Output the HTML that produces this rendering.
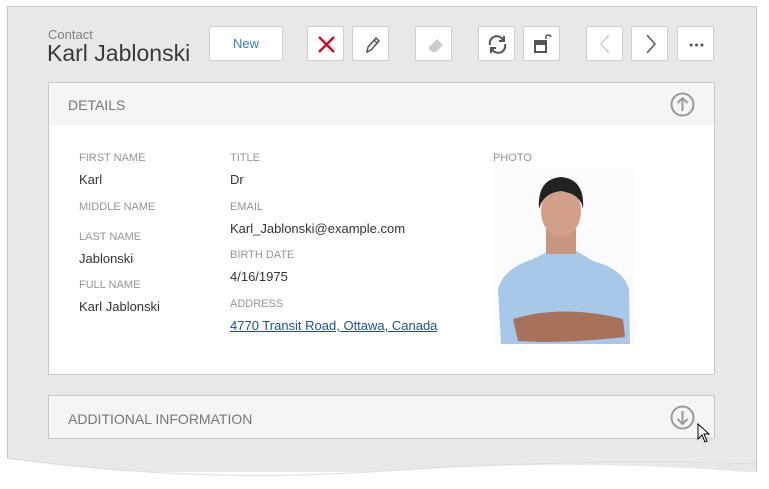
<html><head><style>
body{margin:0;width:769px;height:489px;background:#fff;position:relative;overflow:hidden;font-family:"Liberation Sans",sans-serif}
.win{position:absolute;left:7px;top:6px;width:748px;height:465px;background:#e8e8e7;border:1px solid #c8c8c8;border-bottom:none}
.a{position:absolute}
.btn{position:absolute;top:26px;height:35px;width:37px;background:#fff;border:1px solid #cfcfcf;border-radius:2px;box-sizing:border-box}
.btn svg{position:absolute;left:0;top:0}
.lbl{position:absolute;font-size:11px;color:#959595}
.val{position:absolute;font-size:13px;color:#333}
</style></head><body>
<div class="win"></div>
<svg class="a" style="left:0;top:440px" width="769" height="49"><path d="M0 18 Q200 45 400 30 Q600 18 769 34 L769 49 L0 49Z" fill="#fff"/><path d="M7 18 Q200 45 400 30 Q600 18 756 24" stroke="#ddd" fill="none"/></svg>
<div class="a" style="left:48px;top:27px;font-size:13px;color:#808080">Contact</div>
<div class="a" style="left:47px;top:40px;font-size:23px;color:#3a3a3a">Karl Jablonski</div>
<div class="btn" style="left:209px;width:74px;color:#2f7fd6;font-size:13px;text-align:center;line-height:33px">New</div>
<div class="btn" style="left:307px"><svg width="37" height="35"><path d="M11 10L26 25M26 10L11 25" stroke="#c8102e" stroke-width="2.5"/></svg></div>
<div class="btn" style="left:352px"><svg width="37" height="35"><path d="M14 25L15 20L23 11L26 14L18 23Z M21 13L24 16" stroke="#555" stroke-width="1.5" fill="none"/></svg></div>
<div class="btn" style="left:415px"><svg width="37" height="35"><path d="M12 21L21 12L27 18L20 25L16 25Z" fill="#ccc"/></svg></div>
<div class="btn" style="left:478px"><svg width="37" height="35"><path d="M11 18A7 7 0 0 1 24 13M26 17A7 7 0 0 1 13 22" stroke="#555" stroke-width="2" fill="none"/><path d="M25 9V14H20M12 26V21H17" stroke="#555" stroke-width="2" fill="none"/></svg></div>
<div class="btn" style="left:523px"><svg width="37" height="35"><rect x="10" y="13" width="13" height="13" fill="#555"/><rect x="12" y="18" width="9" height="6" fill="#fff"/><path d="M22 12V9A3 3 0 0 1 27 10" stroke="#555" stroke-width="1.5" fill="none"/></svg></div>
<div class="btn" style="left:586px"><svg width="37" height="35"><path d="M22 8L14 17L22 26" stroke="#ccc" stroke-width="1.5" fill="none"/></svg></div>
<div class="btn" style="left:631px"><svg width="37" height="35"><path d="M15 8L23 17L15 26" stroke="#555" stroke-width="1.5" fill="none"/></svg></div>
<div class="btn" style="left:677px"><svg width="37" height="35"><circle cx="13" cy="18" r="1.5" fill="#555"/><circle cx="18.5" cy="18" r="1.5" fill="#555"/><circle cx="24" cy="18" r="1.5" fill="#555"/></svg></div>
<div class="a" style="left:48px;top:82px;width:665px;height:291px;background:#fff;border:1px solid #c8c8c8"></div>
<div class="a" style="left:49px;top:83px;width:665px;height:42px;background:#f5f5f4"></div>
<div class="a" style="left:68px;top:97px;font-size:14px;color:#777">DETAILS</div>
<svg class="a" style="left:669px;top:91px" width="27" height="27"><circle cx="13.5" cy="13.5" r="11" stroke="#999" stroke-width="2" fill="none"/><path d="M13.5 20V7M8.5 12L13.5 7L18.5 12" stroke="#999" stroke-width="2" fill="none"/></svg>
<div class="lbl" style="left:79px;top:152px">FIRST NAME</div><div class="val" style="left:79px;top:172px">Karl</div>
<div class="lbl" style="left:79px;top:201px">MIDDLE NAME</div>
<div class="lbl" style="left:79px;top:231px">LAST NAME</div><div class="val" style="left:79px;top:251px">Jablonski</div>
<div class="lbl" style="left:79px;top:279px">FULL NAME</div><div class="val" style="left:79px;top:299px">Karl Jablonski</div>
<div class="lbl" style="left:230px;top:152px">TITLE</div><div class="val" style="left:230px;top:172px">Dr</div>
<div class="lbl" style="left:230px;top:201px">EMAIL</div><div class="val" style="left:230px;top:221px">Karl_Jablonski@example.com</div>
<div class="lbl" style="left:230px;top:249px">BIRTH DATE</div><div class="val" style="left:230px;top:269px">4/16/1975</div>
<div class="lbl" style="left:230px;top:298px">ADDRESS</div><div class="val" style="left:230px;top:318px;color:#1e4f9c;text-decoration:underline">4770 Transit Road, Ottawa, Canada</div>
<div class="lbl" style="left:493px;top:152px">PHOTO</div>
<svg class="a" style="left:493px;top:169px" width="141" height="175"><rect width="141" height="175" fill="#fbfbfb"/>
<path d="M8 175L5 120Q10 100 40 90L60 80L80 80L100 92Q130 100 136 120L137 175Z" fill="#a8c8ea"/>
<path d="M20 150Q70 135 130 150L132 168Q70 175 25 172Z" fill="#a9715a"/>
<rect x="53" y="60" width="30" height="25" fill="#c79680"/>
<ellipse cx="68" cy="42" rx="20" ry="26" fill="#d2a08a"/>
<path d="M46 40Q44 10 68 8Q92 10 90 40Q88 25 68 22Q50 24 46 40Z" fill="#222"/>
</svg>
<div class="a" style="left:48px;top:395px;width:665px;height:42px;background:#f5f5f4;border:1px solid #c8c8c8"></div>
<div class="a" style="left:68px;top:411px;font-size:14px;color:#777">ADDITIONAL INFORMATION</div>
<svg class="a" style="left:669px;top:404px" width="27" height="27"><circle cx="13.5" cy="13.5" r="11" stroke="#999" stroke-width="2" fill="none"/><path d="M13.5 7V20M8.5 15L13.5 20L18.5 15" stroke="#999" stroke-width="2" fill="none"/></svg>
<svg class="a" style="left:697px;top:423px" width="14" height="20"><path d="M1 1V16L5 12L8 19L10 18L7 11H12Z" fill="#fff" stroke="#000"/></svg>
</body></html>
